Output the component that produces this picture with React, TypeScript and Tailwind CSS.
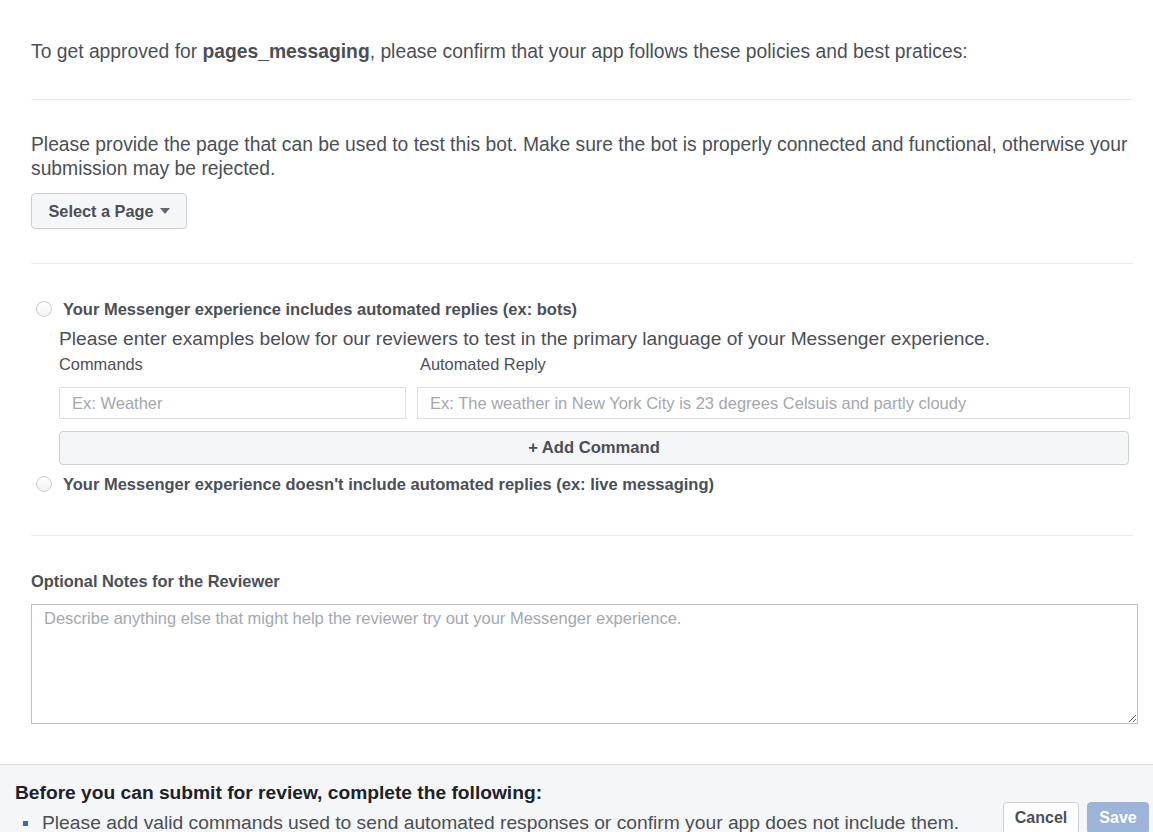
import React from 'react';

const font = { fontFamily: '"Liberation Sans", Arial, sans-serif' };

function Radio() {
  return (
    <span className="w-4 h-4 shrink-0 rounded-full border border-[#ccd0d5] bg-gradient-to-b from-white to-[#f1f2f4] shadow-[inset_0_1px_1px_rgba(0,0,0,0.04)]" />
  );
}

export default function App() {
  return (
    <div className="w-[1153px] h-[832px] overflow-hidden bg-white text-[#4b4f56]" style={font}>
      <div className="pl-[31px] pr-[20px]">
        {/* Intro */}
        <p className="pt-[40px] text-[19.3px] leading-6">
          To get approved for <span className="font-bold">pages_messaging</span>, please confirm that your app follows these policies and best pratices:
        </p>
        <div className="mt-[35px] border-t border-[#e9ebee]" />

        {/* Test page */}
        <p className="mt-[33px] text-[19.3px] leading-6">
          Please provide the page that can be used to test this bot. Make sure the bot is properly connected and functional, otherwise your submission may be rejected.
        </p>
        <button className="mt-3 h-9 w-[156px] flex items-center justify-center gap-1.5 rounded-sm border border-[#ccd0d5] bg-[#f5f6f7] text-[16.3px] font-bold text-[#4b4f56]">
          Select a Page
          <svg width="10" height="6" viewBox="0 0 10 6"><path d="M0 0h10L5 6z" fill="#606770" /></svg>
        </button>
        <div className="mt-[34px] border-t border-[#e9ebee]" />

        {/* Automated replies */}
        <div className="mt-[35px] flex items-center gap-[11px] pl-[5px] h-5">
          <Radio />
          <span className="text-[16.5px] font-bold leading-5">Your Messenger experience includes automated replies (ex: bots)</span>
        </div>
        <div className="pl-[28px]">
          <p className="mt-2 text-[19.2px] leading-6">
            Please enter examples below for our reviewers to test in the primary language of your Messenger experience.
          </p>
          <div className="mt-[3px] flex text-[16.4px] leading-5">
            <span className="w-[361px]">Commands</span>
            <span>Automated Reply</span>
          </div>
          <div className="mt-[13px] flex gap-[11px] pr-[3px]">
            <input
              placeholder="Ex: Weather"
              className="h-8 w-[347px] border border-[#dddfe2] px-3 text-[16.5px] outline-none placeholder:text-[#a4a8ae]"
              style={font}
            />
            <input
              placeholder="Ex: The weather in New York City is 23 degrees Celsuis and partly cloudy"
              className="h-8 flex-1 border border-[#dddfe2] px-3 text-[16.5px] outline-none placeholder:text-[#a4a8ae]"
              style={font}
            />
          </div>
          <button className="mt-3 h-[34px] w-[1070px] rounded-sm border border-[#ccd0d5] bg-[#f5f6f7] text-[16.6px] font-bold text-[#4b4f56]">
            + Add Command
          </button>
        </div>
        <div className="mt-[9px] flex items-center gap-[11px] pl-[5px] h-5">
          <Radio />
          <span className="text-[16.5px] font-bold leading-5">Your Messenger experience doesn't include automated replies (ex: live messaging)</span>
        </div>
        <div className="mt-[41px] border-t border-[#e9ebee]" />

        {/* Notes */}
        <p className="mt-[35px] text-[16.4px] font-bold leading-5">Optional Notes for the Reviewer</p>
        <textarea
          placeholder="Describe anything else that might help the reviewer try out your Messenger experience."
          className="mt-[13px] block h-[120px] w-[1107px] border border-[#bec3c9] px-3 pt-[1px] text-[16.5px] outline-none placeholder:text-[#a4a8ae]"
          style={font}
        />
      </div>

      {/* Footer */}
      <div className="mt-[40px] border-t border-[#dddfe2] bg-[#f5f6f7] h-[200px] flex justify-between">
        <div className="pl-[15px] pt-[16px]">
          <p className="text-[19.2px] font-bold leading-6 text-[#1d2129]">Before you can submit for review, complete the following:</p>
          <ul className="mt-[6px] pl-[8px]">
            <li className="flex items-center gap-[14px] text-[19.25px] leading-6 text-[#4b4f56]">
              <span className="w-[5px] h-[5px] bg-[#4267b2]" />
              Please add valid commands used to send automated responses or confirm your app does not include them.
            </li>
          </ul>
        </div>
        <div className="pt-[37px] pr-[4px] flex gap-2 items-start">
          <button className="h-8 w-[76px] rounded-sm border border-[#ccd0d5] bg-white text-[16px] font-bold text-[#4b4f56]">Cancel</button>
          <button className="h-8 w-[62px] rounded-sm border border-[#9cb4d8] bg-[#9cb4d8] text-[16px] font-bold text-white">Save</button>
        </div>
      </div>
    </div>
  );
}
